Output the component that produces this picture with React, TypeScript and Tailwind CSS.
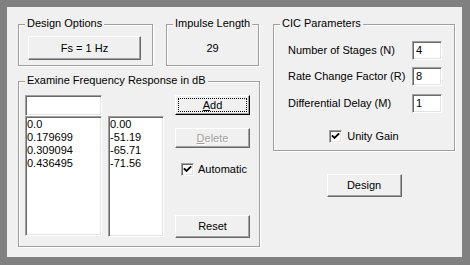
import React from 'react';

const Group: React.FC<{ title: string; className: string; children?: React.ReactNode }> = ({
  title,
  className,
  children,
}) => (
  <div
    className={`relative border border-[#a0a0a0] shadow-[inset_1px_1px_0_#fff,1px_1px_0_#fff] ${className}`}
  >
    <span className="absolute -top-[9px] left-[6px] bg-[#f0f0f0] px-[2px] leading-[14px] whitespace-nowrap">
      {title}
    </span>
    {children}
  </div>
);

const Raised: React.FC<{ className: string; children: React.ReactNode }> = ({ className, children }) => (
  <div
    className={`flex items-center justify-center bg-[#f0f0f0] border border-t-white border-l-white border-r-[#696969] border-b-[#696969] shadow-[inset_-1px_-1px_0_#a0a0a0] ${className}`}
  >
    {children}
  </div>
);

const Sunken: React.FC<{ className: string; children?: React.ReactNode }> = ({ className, children }) => (
  <div
    className={`bg-white border border-t-[#a0a0a0] border-l-[#a0a0a0] border-r-white border-b-white shadow-[inset_1px_1px_0_#696969,inset_-1px_-1px_0_#e3e3e3] ${className}`}
  >
    {children}
  </div>
);

const CheckBox: React.FC = () => (
  <Sunken className="w-[13px] h-[13px] shrink-0 flex items-center justify-center">
    <svg width="9" height="9" viewBox="0 0 9 9">
      <path d="M1.5 4 L3.5 6 L7.5 2" fill="none" stroke="#000" strokeWidth="1.8" strokeLinecap="square" />
    </svg>
  </Sunken>
);

const freqs = ['0.0', '0.179699', '0.309094', '0.436495'];
const mags = ['0.00', '-51.19', '-65.71', '-71.56'];

const cicRows = [
  { label: 'Number of Stages (N)', value: '4' },
  { label: 'Rate Change Factor (R)', value: '8' },
  { label: 'Differential Delay (M)', value: '1' },
];

export default function App() {
  return (
    <div className="w-[470px] h-[265px] bg-[#808080] p-[7px] font-['Liberation_Sans',Arial,sans-serif] text-[11px] text-black leading-[13px]">
      <div className="w-[455px] h-[250px] bg-[#f0f0f0] pt-[17px] pl-[11px] flex gap-[13px]">
        {/* Left column */}
        <div className="flex flex-col w-[242px]">
          <div className="flex gap-[13px] h-[42px]">
            <Group title="Design Options" className="w-[135px] h-[42px] pl-[9px] pt-[11px]">
              <Raised className="w-[113px] h-[24px]">Fs = 1 Hz</Raised>
            </Group>
            <Group title="Impulse Length" className="w-[93px] h-[42px] flex justify-center pt-[17px]">
              <span>29</span>
            </Group>
          </div>

          <Group title="Examine Frequency Response in dB" className="mt-[15px] w-[242px] h-[166px] pl-[6px] pt-[13px] flex">
            <div className="flex flex-col">
              <Sunken className="w-[77px] h-[21px]" />
              <div className="flex gap-[6px]">
                <Sunken className="w-[77px] h-[120px] pl-[1px] pt-[1px]">
                  {freqs.map(f => (
                    <div key={f}>{f}</div>
                  ))}
                </Sunken>
                <Sunken className="w-[56px] h-[121px] pl-[1px] pt-[1px]">
                  {mags.map(m => (
                    <div key={m}>{m}</div>
                  ))}
                </Sunken>
              </div>
            </div>

            <div className="ml-[11px] flex flex-col w-[75px]">
              {/* default button with focus rectangle */}
              <Raised className="w-[75px] h-[20px] relative border-r-black border-b-black">
                <span className="absolute inset-[2px] border border-dotted border-black" />
                <span><u>A</u>dd</span>
              </Raised>
              <Raised className="mt-[13px] w-[75px] h-[20px] text-[#a0a0a0] [text-shadow:1px_1px_0_#fff]">
                <span><u>D</u>elete</span>
              </Raised>
              <div className="mt-[15px] ml-[6px] flex items-center gap-[4px] h-[13px]">
                <CheckBox />
                <span>Automatic</span>
              </div>
              <Raised className="mt-[39px] w-[75px] h-[23px]">Reset</Raised>
            </div>
          </Group>
        </div>

        {/* Right column */}
        <div className="flex flex-col items-center w-[182px]">
          <Group title="CIC Parameters" className="w-[182px] h-[127px] pl-[14px] pt-[15px] flex flex-col">
            <div className="flex flex-col gap-[6px]">
              {cicRows.map((r, i) => (
                <div key={r.label} className={`flex items-center h-[20px] ${i === 2 ? 'mt-[1px]' : ''}`}>
                  <span className="w-[124px] whitespace-nowrap">{r.label}</span>
                  <Sunken className="w-[30px] h-[19px] pl-[3px] pt-[2px]">{r.value}</Sunken>
                </div>
              ))}
            </div>
            <div className="mt-[17px] pr-[14px] flex justify-center items-center gap-[5px]">
              <CheckBox />
              <span>Unity Gain</span>
            </div>
          </Group>
          <Raised className="mt-[23px] w-[75px] h-[23px]">Design</Raised>
        </div>
      </div>
    </div>
  );
}
